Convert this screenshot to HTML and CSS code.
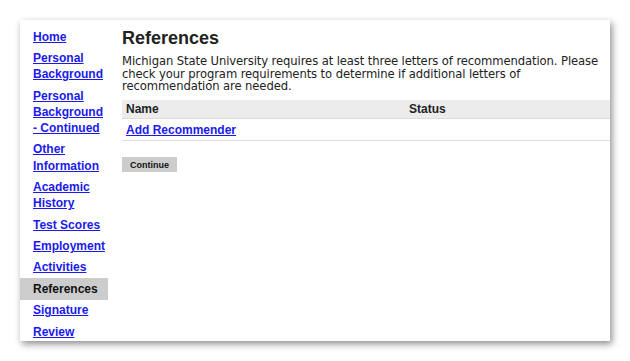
FILE: index.html
```html
<!DOCTYPE html>
<html lang="en">
<head>
    <meta charset="UTF-8">
    <title>References</title>
    <link rel="stylesheet" href="styles.css">
</head>
<body>
    <div class="panel">
        <ul class="side-nav">
            <li><a href="#">Home</a></li>
            <li><a href="#">Personal Background</a></li>
            <li><a href="#">Personal Background - Continued</a></li>
            <li><a href="#">Other Information</a></li>
            <li><a href="#">Academic History</a></li>
            <li><a href="#">Test Scores</a></li>
            <li><a href="#">Employment</a></li>
            <li><a href="#">Activities</a></li>
            <li class="current">References</li>
            <li><a href="#">Signature</a></li>
            <li><a href="#">Review</a></li>
        </ul>

        <div class="main">
            <h1>References</h1>
            <p class="intro">Michigan State University requires at least three letters of recommendation. Please check your program requirements to determine if additional letters of recommendation are needed.</p>

            <table class="ref-table">
                <tr>
                    <th class="col-name">Name</th>
                    <th class="col-status">Status</th>
                </tr>
                <tr>
                    <td colspan="2"><a href="#">Add Recommender</a></td>
                </tr>
            </table>

            <button class="continue-btn">Continue</button>
        </div>
    </div>
</body>
</html>
```

FILE: styles.css
```css
body {
    margin: 0;
    padding: 20px;
    background-color: #ffffff;
    font-family: "Liberation Sans", Arial, sans-serif;
    color: #222222;
}
.panel {
    display: flex;
    width: 590px;
    height: 321px;
    background-color: #ffffff;
    box-shadow: 2px 3px 7px rgba(0, 0, 0, 0.45);
}
.side-nav {
    list-style: none;
    margin: 0;
    padding: 6px 0 0 0;
    width: 88px;
    flex-shrink: 0;
}
.side-nav li {
    padding: 2.6px 0 2.6px 13px;
    font-size: 12px;
    font-weight: bold;
    line-height: 16.2px;
}
.side-nav a {
    color: #1a1aee;
}
.side-nav li.current {
    background-color: #cccccc;
    color: #111111;
}
.main {
    flex: 1;
    padding: 6px 0 0 14px;
}
.main h1 {
    margin: 0;
    font-size: 18px;
    line-height: 24px;
    color: #222222;
}
.intro {
    margin: 5px 0 0 0;
    font-family: "DejaVu Sans", sans-serif;
    font-size: 11.6px;
    letter-spacing: -0.1px;
    line-height: 12.7px;
    color: #222222;
}
.ref-table {
    width: 100%;
    margin-top: 7px;
    border-collapse: collapse;
    font-size: 12px;
}
.ref-table th {
    background-color: #ececec;
    text-align: left;
    height: 18px;
    padding: 0 4px;
    border-bottom: 1px solid #dddddd;
}
.ref-table th.col-name {
    width: 275px;
}
.ref-table td {
    height: 21px;
    padding: 0 4px;
    border-bottom: 1px solid #dddddd;
    font-weight: bold;
}
.ref-table td a {
    color: #1a1aee;
}
.continue-btn {
    margin-top: 16px;
    width: 55px;
    height: 15px;
    padding: 0;
    border: none;
    background-color: #cccccc;
    font-family: "Liberation Sans", Arial, sans-serif;
    font-size: 9px;
    font-weight: bold;
    color: #111111;
}
```
